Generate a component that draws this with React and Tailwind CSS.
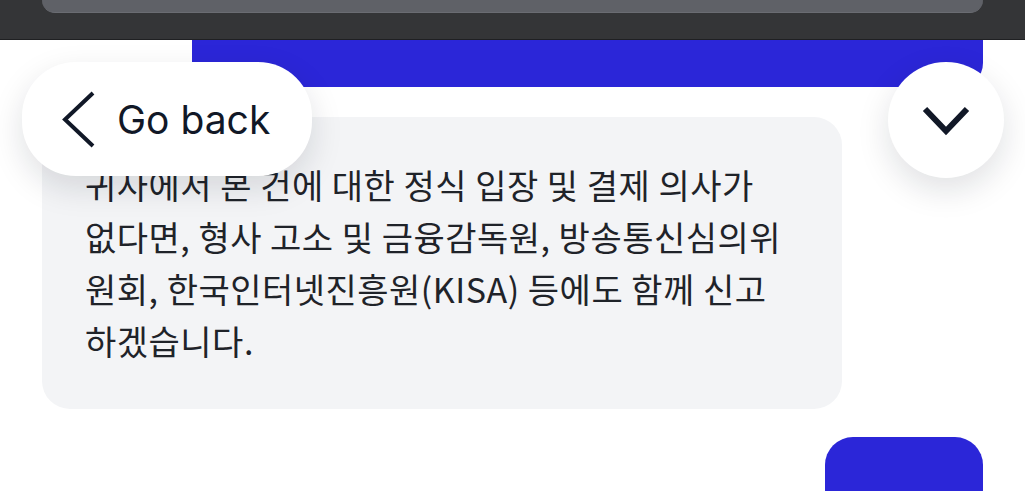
import React from "react";

// lines wrap exactly like the reference bubble
const bodyLines = [
  "귀사에서 본 건에 대한 정식 입장 및 결제 의사가",
  "없다면, 형사 고소 및 금융감독원, 방송통신심의위",
  "원회, 한국인터넷진흥원(KISA) 등에도 함께 신고",
  "하겠습니다.",
];

const GoBack = () => (
  <button className="absolute left-[22px] top-[62px] flex h-[114px] w-[290px] items-center gap-[22px] rounded-[54px] bg-white pl-[40px] shadow-[0_12px_32px_rgba(17,24,39,0.13)]">
    <svg width="33" height="57" viewBox="0 0 33 57" fill="none">
      <polyline
        points="31,2 3,28.5 31,55"
        stroke="#111827"
        strokeWidth="4"
        strokeLinejoin="miter"
      />
    </svg>
    <span className="text-[39px] leading-none text-[#111827] [font-family:Inter,'Noto_Sans',sans-serif]">
      Go back
    </span>
  </button>
);

const ScrollDown = () => (
  <button className="absolute right-[21px] top-[62px] flex h-[116px] w-[116px] items-center justify-center rounded-full bg-white shadow-[0_12px_32px_rgba(17,24,39,0.13)]">
    <svg width="48" height="30" viewBox="0 0 48 30" fill="none" className="mt-[2px]">
      <polyline
        points="3,3 24,25 45,3"
        stroke="#111827"
        strokeWidth="6"
        strokeLinejoin="miter"
      />
    </svg>
  </button>
);

export default function App() {
  return (
    <div className="relative h-[491px] w-full overflow-hidden bg-white [font-family:'Noto_Sans_CJK_KR',sans-serif]">
      {/* app top bar */}
      <div className="h-[40px] border-b border-[#1f2022] bg-[#343537]">
        <div className="mx-[42px] h-[13px] rounded-b-[20px] border-b border-[#6a6c72] bg-[#5f6167]" />
      </div>

      <div className="flex flex-col">
        <div className="ml-auto mr-[42px] h-[47px] w-[791px] rounded-b-[24px] bg-[#2b26d8]" />

        <div className="ml-[42px] mt-[30px] w-[800px] rounded-[28px] bg-[#f3f4f6] px-[43px] py-[42px]">
          <p className="whitespace-nowrap text-[34px] leading-[52px] tracking-[0.5px] text-[#1f2329] [font-family:'Noto_Sans_CJK_KR','Noto_Sans',sans-serif]">
            {bodyLines.map((line) => (
              <span key={line} className="block">
                {line}
              </span>
            ))}
          </p>
        </div>

        <div className="ml-auto mr-[42px] mt-[28px] h-[80px] w-[158px] rounded-[28px] bg-[#2b26d8]" />
      </div>

      <GoBack />
      <ScrollDown />
    </div>
  );
}
